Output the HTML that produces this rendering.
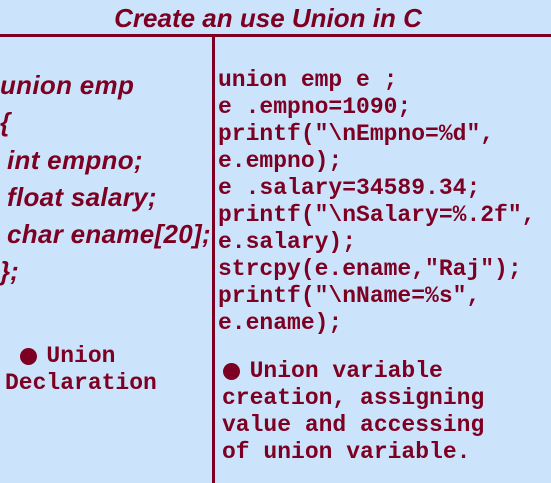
<!DOCTYPE html>
<html><head><meta charset="utf-8"><style>
body{margin:0;width:551px;height:483px;background:#cce4fb;overflow:hidden;position:relative;color:#7d0022}
.t{position:absolute;white-space:pre;font-family:"Liberation Sans",sans-serif;font-weight:bold;font-style:italic}
.m{position:absolute;white-space:pre;font-family:"Liberation Mono",monospace;font-weight:bold;font-size:23px;line-height:27px}
.dot{display:inline-block;width:17px;height:17px;border-radius:50%;background:#7d0022;vertical-align:-1px}
</style></head><body>
<div class="t" style="left:0;width:536px;text-align:center;top:3px;font-size:26px">Create an use Union in C</div>
<div style="position:absolute;left:0;top:34px;width:551px;height:3px;background:#7d0022"></div>
<div style="position:absolute;left:212px;top:34px;width:3px;height:449px;background:#7d0022"></div>
<div class="t" style="left:0;top:70px;font-size:26px;letter-spacing:0.3px">union emp</div>
<div class="t" style="left:0;top:107px;font-size:26px">{</div>
<div class="t" style="left:7px;top:145px;font-size:26px;letter-spacing:0.3px">int empno;</div>
<div class="t" style="left:7px;top:182px;font-size:26px;letter-spacing:0.3px">float salary;</div>
<div class="t" style="left:7px;top:219px;font-size:26px;letter-spacing:0.3px">char ename[20];</div>
<div class="t" style="left:0;top:256px;font-size:26px">};</div>
<div class="m" style="left:218px;top:67px">union emp e ;
e .empno=1090;
printf("\nEmpno=%d",
e.empno);
e .salary=34589.34;
printf("\nSalary=%.2f",
e.salary);
strcpy(e.ename,"Raj");
printf("\nName=%s",
e.ename);</div>
<div class="m" style="left:5px;top:343px">   Union
Declaration</div>
<span class="dot" style="position:absolute;left:20px;top:348px"></span>
<div class="m" style="left:222px;top:358px">  Union variable
creation, assigning
value and accessing
of union variable.</div>
<span class="dot" style="position:absolute;left:223px;top:363px"></span>
</body></html>
